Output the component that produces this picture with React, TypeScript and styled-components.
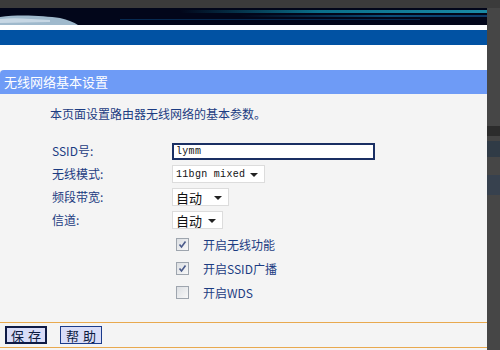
import styled, { createGlobalStyle } from "styled-components";

const GlobalStyle = createGlobalStyle`
  html, body {
    margin: 0;
    padding: 0;
    background: #3d3d3d;
    width: 500px;
    height: 350px;
    overflow: hidden;
  }
`;

type Row = { label: string };

const FONT = `"Noto Sans CJK SC", "DejaVu Sans", sans-serif`;
const MONO = `"Liberation Mono", "DejaVu Sans Mono", monospace`;

const Frame = styled.div`
  display: flex;
  flex-direction: column;
  width: 500px;
  height: 350px;
  background: #3d3d3d;
`;

const TopGap = styled.div`
  height: 8px;
  background: #3b3b3b;
`;

const Body = styled.div`
  display: flex;
  flex: 1;
`;

const Main = styled.div`
  width: 487px;
  display: flex;
  flex-direction: column;
  background: #f4f4f4;
`;

const SideStrip = styled.div`
  flex: 1;
  display: flex;
  flex-direction: column;
  background: #464646;
`;

const StripBand = styled.div<{ $h: number; $c: string }>`
  height: ${({ $h }) => $h}px;
  background: ${({ $c }) => $c};
`;

const Banner = styled.div`
  height: 17px;
  background: #02061a;
  overflow: hidden;
  svg {
    display: block;
  }
`;

const WhiteLine = styled.div<{ $h: number }>`
  height: ${({ $h }) => $h}px;
  background: #ffffff;
`;

const BlueBand = styled.div`
  height: 15px;
  background: #0152a3;
`;

const TitleBar = styled.div`
  height: 24px;
  background: #6e9bf6;
  color: #ffffff;
  font-family: ${FONT};
  font-size: 13px;
  line-height: 23px;
  padding-left: 4px;
  border-top-left-radius: 4px;
`;

const Content = styled.div`
  flex: 1;
  display: flex;
  flex-direction: column;
  padding: 11px 0 0 50px;
  font-family: ${FONT};
  font-size: 12px;
  color: #1c3c82;
`;

const Desc = styled.div`
  height: 18px;
  line-height: 18px;
  margin-bottom: 19px;
`;

const FormGrid = styled.div`
  display: grid;
  grid-template-columns: 122px auto;
  row-gap: 5px;
  align-items: center;
`;

const Label = styled.div`
  padding-left: 2px;
  line-height: 18px;
`;

const TextInput = styled.div`
  width: 198px;
  height: 15px;
  border: 1px solid #1a2f63;
  box-shadow: inset 0 0 0 1px #1a2f63;
  background: #ffffff;
  color: #111;
  font-family: ${MONO};
  font-size: 10px;
  letter-spacing: 0.3px;
  line-height: 15px;
  padding-left: 3px;
`;

const Select = styled.div<{ $w: number; $mono?: boolean }>`
  width: ${({ $w }) => $w}px;
  height: 18px;
  box-sizing: border-box;
  border: 1px solid #dcdcdc;
  background: #ffffff;
  display: flex;
  align-items: center;
  justify-content: space-between;
  padding: 0 6px 0 3px;
  color: #111;
  font-family: ${({ $mono }) => ($mono ? MONO : FONT)};
  font-size: ${({ $mono }) => ($mono ? 10 : 13)}px;
  letter-spacing: ${({ $mono }) => ($mono ? 0.3 : 0)}px;
`;

const Caret = styled.span`
  width: 0;
  height: 0;
  border-left: 4px solid transparent;
  border-right: 4px solid transparent;
  border-top: 4px solid #222;
  margin-top: 1px;
`;

const Checks = styled.div`
  display: flex;
  flex-direction: column;
  gap: 11px;
  margin: 9px 0 0 126px;
`;

const CheckRow = styled.div`
  display: flex;
  align-items: center;
  height: 13px;
  gap: 14px;
`;

const Box = styled.div<{ $on: boolean }>`
  width: 11px;
  height: 11px;
  border: 1px solid #9ea5ae;
  background: linear-gradient(135deg, #dcdfe3, #f8f8f8);
  display: flex;
  align-items: center;
  justify-content: center;
  svg {
    display: ${({ $on }) => ($on ? "block" : "none")};
  }
`;

const CheckLabel = styled.span`
  font-size: 12px;
  line-height: 13px;
`;

const Footer = styled.div`
  border-top: 1px solid #e8a94f;
  border-bottom: 1px solid #e8a94f;
  height: 24px;
  margin-bottom: 2px;
  display: flex;
  align-items: center;
  gap: 13px;
  padding-left: 5px;
`;

const Button = styled.div<{ $primary?: boolean }>`
  width: 42px;
  height: 18px;
  box-sizing: border-box;
  border: ${({ $primary }) => ($primary ? "2px solid #0e1a45" : "1px solid #1a3a8a")};
  background: #d8dcf8;
  color: #0c1a40;
  font-family: ${FONT};
  font-size: 13px;
  letter-spacing: 4px;
  display: flex;
  align-items: center;
  justify-content: center;
  padding-left: 4px;
`;

const Tick = () => (
  <svg width="9" height="9" viewBox="0 0 9 9">
    <path d="M1.5 4.5 L3.5 7 L7.5 1.5" stroke="#4a5a8a" strokeWidth="1.6" fill="none" />
  </svg>
);

const BannerArt = () => (
  <svg width="487" height="17" viewBox="0 0 487 17">
    <defs>
      <linearGradient id="teal" x1="0" x2="1" y1="0" y2="0">
        <stop offset="0" stopColor="#02061a" />
        <stop offset="0.45" stopColor="#0a6f8a" />
        <stop offset="1" stopColor="#1a8aa6" />
      </linearGradient>
      <linearGradient id="teal2" x1="0" x2="1" y1="0" y2="0">
        <stop offset="0" stopColor="#02061a" />
        <stop offset="0.6" stopColor="#0b4d78" />
        <stop offset="1" stopColor="#0d3a6a" />
      </linearGradient>
    </defs>
    <rect x="180" y="2" width="307" height="3" fill="url(#teal)" />
    <rect x="240" y="7" width="247" height="2" fill="url(#teal2)" />
    <rect x="120" y="11" width="300" height="1" fill="#0a3a6a" opacity="0.7" />
    <path d="M0 9 C 20 6, 45 8, 60 10 C 68 12, 74 14, 78 17 L 0 17 Z" fill="#9fb9cc" />
    <path d="M0 11 C 15 9, 30 11, 50 12 L 50 14 L 0 15 Z" fill="#d8e4ee" opacity="0.7" />
  </svg>
);

const rows: Row[] = [{ label: "SSID号:" }, { label: "无线模式:" }, { label: "频段带宽:" }, { label: "信道:" }];

const checks = [
  { label: "开启无线功能", on: true },
  { label: "开启SSID广播", on: true },
  { label: "开启WDS", on: false },
];

export default function App() {
  return (
    <>
      <GlobalStyle />
      <Frame>
        <TopGap />
        <Body>
          <Main>
            <Banner>
              <BannerArt />
            </Banner>
            <WhiteLine $h={5} />
            <BlueBand />
            <WhiteLine $h={25} />
            <TitleBar>无线网络基本设置</TitleBar>
            <Content>
              <Desc>本页面设置路由器无线网络的基本参数。</Desc>
              <FormGrid>
                <Label>{rows[0].label}</Label>
                <TextInput>lymm</TextInput>
                <Label>{rows[1].label}</Label>
                <Select $w={93} $mono>
                  11bgn mixed <Caret />
                </Select>
                <Label>{rows[2].label}</Label>
                <Select $w={57}>
                  自动 <Caret />
                </Select>
                <Label>{rows[3].label}</Label>
                <Select $w={51}>
                  自动 <Caret />
                </Select>
              </FormGrid>
              <Checks>
                {checks.map((c) => (
                  <CheckRow key={c.label}>
                    <Box $on={c.on}>
                      <Tick />
                    </Box>
                    <CheckLabel>{c.label}</CheckLabel>
                  </CheckRow>
                ))}
              </Checks>
            </Content>
            <Footer>
              <Button $primary>保存</Button>
              <Button>帮助</Button>
            </Footer>
          </Main>
          <SideStrip>
            <StripBand $h={118} $c="#464646" />
            <StripBand $h={10} $c="#2c2c2c" />
            <StripBand $h={5} $c="#444" />
            <StripBand $h={16} $c="#303b46" />
            <StripBand $h={18} $c="#464646" />
            <StripBand $h={20} $c="#37414e" />
          </SideStrip>
        </Body>
      </Frame>
    </>
  );
}
